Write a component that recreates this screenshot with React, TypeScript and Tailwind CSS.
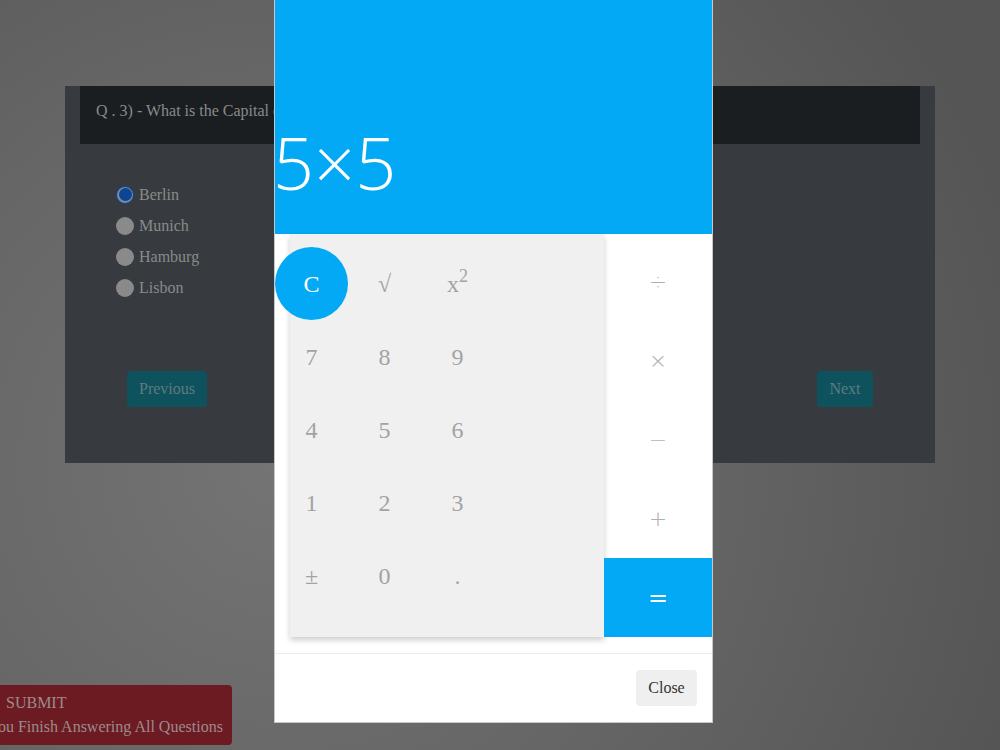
import React from "react";

const serif = { fontFamily: '"Liberation Serif", "Times New Roman", serif' };

function Radio({ checked, label }: { checked?: boolean; label: string }) {
  return (
    <div className="flex items-center h-[31px]">
      {checked ? (
        <span className="w-[18px] h-[18px] rounded-full bg-[#7d8a99] flex items-center justify-center border border-[#0b4290]">
          <span className="w-[13px] h-[13px] rounded-full bg-[#0a4695]" />
        </span>
      ) : (
        <span className="w-[18px] h-[18px] rounded-full bg-[#8a8a8a]" />
      )}
      <span className="ml-[5px] text-[16px] text-[#8a8a8a]">{label}</span>
    </div>
  );
}

export default function App() {
  const keys = [
    ["C", "√", "x2"],
    ["7", "8", "9"],
    ["4", "5", "6"],
    ["1", "2", "3"],
    ["±", "0", "."],
  ];
  const ops = ["÷", "×", "−", "+"];
  return (
    <div
      className="relative w-[1000px] h-[750px] overflow-hidden bg-[radial-gradient(circle_at_28%_62%,#747474_0%,#666_45%,#555_90%)]"
      style={serif}
    >
      {/* quiz card underneath */}
      <div className="absolute left-[65px] top-[86px] w-[870px] h-[377px] bg-[#373b3f] px-[15px]">
        <div className="h-[58px] bg-[#1b1e21] flex items-center pl-[16px] pb-[8px] text-[16px] text-[#8a8a8a]">
          Q . 3) - What is the Capital of Germany?
        </div>
        <div className="pl-[36px] pt-[35px] flex flex-col">
          <Radio checked label="Berlin" />
          <Radio label="Munich" />
          <Radio label="Hamburg" />
          <Radio label="Lisbon" />
        </div>
        <div className="flex justify-between mt-[68px] pl-[47px] pr-[47px]">
          <div className="w-[80px] h-[36px] rounded-[4px] bg-[#0e525d] text-[#5e7b80] text-[16px] flex items-center justify-center">
            Previous
          </div>
          <div className="w-[56px] h-[36px] rounded-[4px] bg-[#0e525d] text-[#5e7b80] text-[16px] flex items-center justify-center">
            Next
          </div>
        </div>
      </div>

      {/* submit button */}
      <div className="absolute left-[-20px] top-[685px] w-[252px] h-[60px] rounded-[4px] bg-[#6c1b22] text-[#9e8a8c] text-[16px] leading-[24px] pt-[6px] overflow-hidden whitespace-nowrap">
        <div className="pl-[26px]">SUBMIT</div>
        <div className="pl-[8px]">You Finish Answering All Questions</div>
      </div>

      {/* modal */}
      <div className="absolute left-[274px] top-0 w-[439px] h-[723px] bg-white border-x border-b border-[#c8c8c8] flex flex-col">
        <div
          className="h-[234px] bg-[#03a9f4] flex items-end pb-[36px] text-white text-[72px] leading-[72px] font-light"
          style={{ fontFamily: '"Open Sans", "Noto Sans", sans-serif' }}
        >
          <span className="ml-[-2px]">5×5</span>
        </div>
        <div className="flex h-[403px]">
          <div className="ml-[15px] w-[314px] h-full bg-[#f0f0f0] shadow-[0_3px_6px_rgba(0,0,0,0.2)]">
            <div className="ml-[-15px] pt-[13px] flex flex-col">
              {keys.map((row, i) => (
                <div key={i} className="flex h-[73px]">
                  {row.map((k) => (
                    <div
                      key={k}
                      className={
                        "w-[73px] h-[73px] flex items-center justify-center text-[24px] " +
                        (k === "C" ? "rounded-full bg-[#03a9f4] text-white" : "text-[#a3a3a3]")
                      }
                    >
                      {k === "x2" ? (
                        <span>
                          x<sup className="text-[18px] relative top-[-10px]">2</sup>
                        </span>
                      ) : (
                        k
                      )}
                    </div>
                  ))}
                </div>
              ))}
            </div>
          </div>
          <div className="flex-1 flex flex-col pt-[8px]">
            {ops.map((o) => (
              <div
                key={o}
                className="h-[79px] flex items-center justify-center text-[22px] text-[#b0b0b0]"
                style={{ fontFamily: '"DejaVu Sans", sans-serif', fontWeight: 200 }}
              >
                {o}
              </div>
            ))}
            <div
              className="h-[79px] flex items-center justify-center text-[24px] text-white bg-[#03a9f4]"
              style={{ fontFamily: '"DejaVu Sans", sans-serif' }}
            >
              =
            </div>
          </div>
        </div>
        <div className="mt-[16px] border-t border-[#e9ecef] flex-1 flex items-start justify-end pr-[15px] pt-[16px]">
          <div className="w-[61px] h-[36px] rounded-[4px] bg-[#efefef] text-[#333] text-[16px] flex items-center justify-center">
            Close
          </div>
        </div>
      </div>
    </div>
  );
}
